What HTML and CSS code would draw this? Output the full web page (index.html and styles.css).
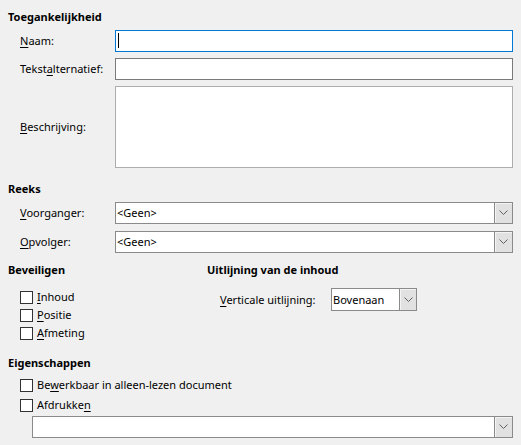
FILE: index.html
```html
<!DOCTYPE html>
<html lang="nl">
<head>
<meta charset="utf-8">
<title>Toegankelijkheid</title>
<link rel="stylesheet" href="styles.css">
</head>
<body>
<div class="dialog">
  <section class="group group-access">
    <h2 class="group-title">Toegankelijkheid</h2>
    <div class="form-grid">
      <label class="label"><u>N</u>aam:</label>
      <div class="field field-focus"><span class="caret"></span></div>
      <label class="label">Tekst<u>a</u>lternatief:</label>
      <div class="field"></div>
      <label class="label"><u>B</u>eschrijving:</label>
      <div class="field field-area"></div>
    </div>
  </section>

  <section class="group group-series">
    <h2 class="group-title">Reeks</h2>
    <div class="form-grid form-grid-combo">
      <label class="label"><u>V</u>oorganger:</label>
      <div class="combo"><span class="combo-text">&lt;Geen&gt;</span><span class="combo-btn"><svg width="9" height="6" viewBox="0 0 9 6"><polyline points="0.5,0.5 4.5,4.5 8.5,0.5" fill="none" stroke="#606060" stroke-width="1"/></svg></span></div>
      <label class="label"><u>O</u>pvolger:</label>
      <div class="combo"><span class="combo-text">&lt;Geen&gt;</span><span class="combo-btn"><svg width="9" height="6" viewBox="0 0 9 6"><polyline points="0.5,0.5 4.5,4.5 8.5,0.5" fill="none" stroke="#606060" stroke-width="1"/></svg></span></div>
    </div>
  </section>

  <div class="two-col">
    <section class="group group-protect">
      <h2 class="group-title">Beveiligen</h2>
      <div class="check-list">
        <div class="check"><span class="box"></span><span><u>I</u>nhoud</span></div>
        <div class="check"><span class="box"></span><span><u>P</u>ositie</span></div>
        <div class="check"><span class="box"></span><span><u>A</u>fmeting</span></div>
      </div>
    </section>
    <section class="group group-align">
      <h2 class="group-title">Uitlijning van de inhoud</h2>
      <div class="align-row">
        <label class="label"><u>V</u>erticale uitlijning:</label>
        <div class="combo combo-small"><span class="combo-text">Bovenaan</span><span class="combo-btn"><svg width="9" height="6" viewBox="0 0 9 6"><polyline points="0.5,0.5 4.5,4.5 8.5,0.5" fill="none" stroke="#606060" stroke-width="1"/></svg></span></div>
      </div>
    </section>
  </div>

  <section class="group group-props">
    <h2 class="group-title">Eigenschappen</h2>
    <div class="check-list check-list-wide">
      <div class="check"><span class="box"></span><span>Be<u>w</u>erkbaar in alleen-lezen document</span></div>
      <div class="check"><span class="box"></span><span>Afdrukke<u>n</u></span></div>
    </div>
    <div class="combo combo-print"><span class="combo-text"></span><span class="combo-btn"><svg width="9" height="6" viewBox="0 0 9 6"><polyline points="0.5,0.5 4.5,4.5 8.5,0.5" fill="none" stroke="#606060" stroke-width="1"/></svg></span></div>
  </section>
</div>
</body>
</html>
```

FILE: styles.css
```css
* { box-sizing: border-box; }
html, body { margin: 0; padding: 0; }
body {
  background: #f0f0f0;
  color: #000;
  font-family: "Noto Sans", "Open Sans", sans-serif;
  font-size: 11px;
  line-height: 16px;
}
.dialog {
  padding: 9px 8px 0 8px;
  width: 521px;
}
u { text-decoration: underline; text-underline-offset: 2px; }
.group-title {
  margin: 0;
  font-size: 11px;
  font-weight: 700;
  line-height: 16px;
  height: 16px;
}
.form-grid {
  display: grid;
  grid-template-columns: 95px 1fr;
  row-gap: 6px;
  padding-left: 12px;
  margin-top: 5px;
  align-items: center;
}
.label { white-space: nowrap; }
.field {
  height: 22px;
  background: #fff;
  border: 1px solid #7a7a7a;
  position: relative;
}
.field-focus { border-color: #0078d7; }
.field-area { height: 82px; border-color: #adadad; }
.caret {
  position: absolute;
  left: 2px;
  top: 2px;
  width: 1px;
  height: 15px;
  background: #000;
}
.group-series { margin-top: 13px; }
.form-grid-combo { row-gap: 7px; }
.combo {
  display: flex;
  height: 22px;
  background: #fff;
  border: 1px solid #8a8a8a;
}
.combo-text {
  flex: 1;
  padding-left: 1px;
  line-height: 20px;
  white-space: nowrap;
  overflow: hidden;
}
.combo-btn {
  width: 18px;
  background: #e1e1e1;
  border-left: 1px solid #8a8a8a;
  box-shadow: inset 1px 1px 0 #f4f4f4;
  display: flex;
  align-items: center;
  justify-content: center;
}
.two-col {
  display: grid;
  grid-template-columns: 199px 1fr;
  margin-top: 9px;
}
.check-list {
  display: flex;
  flex-direction: column;
  padding-left: 12px;
  margin-top: 10px;
}
.check {
  display: flex;
  align-items: center;
  gap: 4px;
  height: 18px;
}
.box {
  width: 13px;
  height: 13px;
  background: #fff;
  border: 1px solid #333;
  flex: none;
}
.align-row {
  display: flex;
  align-items: center;
  padding-left: 13px;
  margin-top: 10px;
}
.align-row .label { width: 111px; }
.combo-small { width: 86px; height: 23px; }
.combo-small .combo-text { line-height: 21px; }
.combo-small .combo-btn { width: 17px; }
.group-props { margin-top: 13px; }
.check-list-wide { margin-top: 4px; }
.check-list-wide .check { height: 20px; }
.combo-print { margin: 1px 0 0 24px; }
```
